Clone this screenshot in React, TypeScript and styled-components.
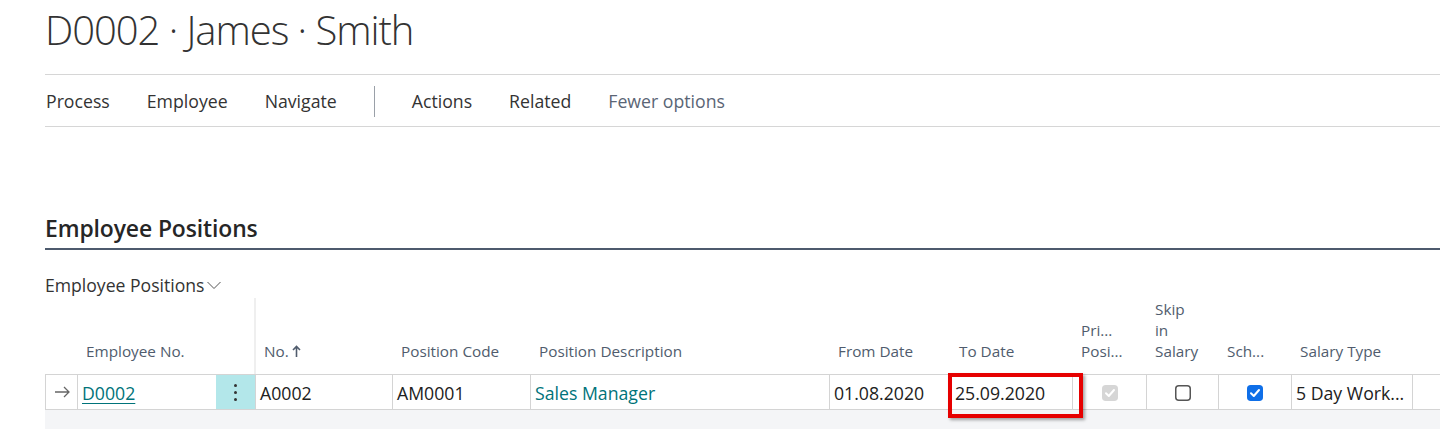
import React from "react";
import styled, { createGlobalStyle } from "styled-components";

const Global = createGlobalStyle`
  html, body { margin: 0; padding: 0; background: #fff; }
  body { font-family: "Open Sans", "Noto Sans", sans-serif; color: #212121; }
`;

const Page = styled.div`
  width: 1440px;
  height: 429px;
  overflow: hidden;
  padding-left: 45px;
  box-sizing: border-box;
`;

const Title = styled.h1`
  margin: 0;
  padding: 5px 0 0 0;
  height: 68px;
  box-sizing: border-box;
  font-size: 40px;
  font-weight: 300;
  line-height: 50px;
  color: #333;
  white-space: nowrap;
  letter-spacing: -1.05px;
`;

const Toolbar = styled.nav`
  margin-top: 6px;
  height: 53px;
  border-top: 1px solid #d6d6d6;
  border-bottom: 1px solid #d6d6d6;
  display: flex;
  align-items: center;
  box-sizing: border-box;
  padding-left: 1px;
  padding-top: 1px;
`;

const ToolItem = styled.span<{ $muted?: boolean }>`
  font-size: 17.7px;
  color: ${(p) => (p.$muted ? "#5a6575" : "#333")};
  margin-right: 37px;
  white-space: nowrap;
`;

const ToolSep = styled.span`
  width: 1px;
  height: 31px;
  background: #9aa0a8;
  margin-right: 37px;
`;

const SectionTitle = styled.h2`
  margin: 87px 0 0 0;
  height: 36px;
  font-size: 22.9px;
  font-weight: 600;
  line-height: 30px;
  color: #262626;
  border-bottom: 2px solid #4d5a6d;
  box-sizing: border-box;
  letter-spacing: -0.1px;
`;

const SubTitle = styled.div`
  margin-top: 23px;
  height: 24px;
  font-size: 17.6px;
  line-height: 24px;
  color: #333;
  display: flex;
  align-items: center;
  gap: 2px;
`;

const Grid = styled.div`
  margin-top: 1px;
  display: grid;
  grid-template-columns: 33px 138px 40px 137px 138px 299px 121px 122px 74px 72px 73px 121px 1fr;
`;

const HeadCell = styled.div<{ $divider?: boolean }>`
  height: 76px;
  box-sizing: border-box;
  padding: 0 6px 12px 8px;
  display: flex;
  flex-direction: column;
  justify-content: flex-end;
  font-size: 15.3px;
  line-height: 21px;
  color: #505c6d;
  white-space: nowrap;
  border-right: ${(p) => (p.$divider ? "2px solid #efefef" : "none")};
`;

const Cell = styled.div<{ $accent?: boolean; $noRight?: boolean; $center?: boolean }>`
  position: relative;
  height: 36px;
  box-sizing: border-box;
  border-top: 1px solid #d4d4d4;
  border-bottom: 1px solid #d4d4d4;
  border-right: ${(p) => (p.$noRight ? "none" : "1px solid #d4d4d4")};
  background: ${(p) => (p.$accent ? "#b3e7ea" : "#fff")};
  display: flex;
  align-items: center;
  justify-content: ${(p) => (p.$center ? "center" : "flex-start")};
  padding: 1px 4px 0 4px;
  font-size: 17.7px;
  color: #212121;
  white-space: nowrap;
  overflow: visible;
`;

const FirstCell = styled(Cell)`
  border-left: 1px solid #d4d4d4;
  justify-content: center;
  color: #666;
  padding: 0;
`;

const Link = styled.a`
  color: #00737a;
  text-decoration: underline;
  text-underline-offset: 3px;
  text-decoration-thickness: 1px;
`;

const TealText = styled.span`
  color: #00737a;
`;

const Dots = styled.span`
  display: flex;
  flex-direction: column;
  gap: 4px;
  align-items: center;
  span {
    width: 3px;
    height: 3px;
    border-radius: 50%;
    background: #333;
  }
`;

const Highlight = styled.div`
  position: absolute;
  z-index: 5;
  left: -3px;
  top: -2px;
  width: 135px;
  height: 45px;
  box-sizing: border-box;
  border: 4px solid #e60000;
  box-shadow: 2px 2px 3px rgba(0, 0, 0, 0.35);
  pointer-events: none;
`;

const Footer = styled.div`
  grid-column: 1 / -1;
  height: 20px;
  background: #f4f5f7;
`;

const Box = ({ checked, disabled }: { checked: boolean; disabled?: boolean }) => {
  const fill = disabled ? "#d6d6d6" : checked ? "#0f6fe8" : "#fff";
  const stroke = disabled ? "#d6d6d6" : checked ? "#0f6fe8" : "#555";
  return (
    <svg width="16" height="16" viewBox="0 0 16 16">
      <rect x="0.75" y="0.75" width="14.5" height="14.5" rx="3" fill={fill} stroke={stroke} strokeWidth="1.5" />
      {checked && (
        <path d="M4 8.3 L6.8 11 L12 5" fill="none" stroke="#fff" strokeWidth="2" strokeLinecap="round" strokeLinejoin="round" />
      )}
    </svg>
  );
};

const Chevron = () => (
  <svg width="16" height="10" viewBox="0 0 16 10">
    <path d="M1.5 2 L8 8.5 L14.5 2" fill="none" stroke="#555" strokeWidth="1" />
  </svg>
);

const Arrow = () => (
  <svg width="16" height="12" viewBox="0 0 16 12">
    <path d="M1 6 H15 M10 1 L15 6 L10 11" fill="none" stroke="#666" strokeWidth="1.3" />
  </svg>
);

const SortUp = () => (
  <svg width="9" height="13" viewBox="0 0 9 13" style={{ marginLeft: 3 }}>
    <path d="M4.5 12 V2 M1 5 L4.5 1.5 L8 5" fill="none" stroke="#505c6d" strokeWidth="1.6" />
  </svg>
);

export default function App() {
  return (
    <>
      <Global />
      <Page>
        <Title>D0002 · James · Smith</Title>
        <Toolbar>
          <ToolItem>Process</ToolItem>
          <ToolItem>Employee</ToolItem>
          <ToolItem>Navigate</ToolItem>
          <ToolSep />
          <ToolItem>Actions</ToolItem>
          <ToolItem>Related</ToolItem>
          <ToolItem $muted>Fewer options</ToolItem>
        </Toolbar>
        <SectionTitle>Employee Positions</SectionTitle>
        <SubTitle>
          Employee Positions
          <Chevron />
        </SubTitle>
        <Grid>
          <HeadCell />
          <HeadCell>Employee No.</HeadCell>
          <HeadCell $divider />
          <HeadCell>
            <span style={{ display: "flex", alignItems: "center" }}>
              No.
              <SortUp />
            </span>
          </HeadCell>
          <HeadCell>Position Code</HeadCell>
          <HeadCell>Position Description</HeadCell>
          <HeadCell>From Date</HeadCell>
          <HeadCell>To Date</HeadCell>
          <HeadCell>
            <span>Pri...</span>
            <span>Posi...</span>
          </HeadCell>
          <HeadCell>
            <span>Skip</span>
            <span>in</span>
            <span>Salary</span>
          </HeadCell>
          <HeadCell>Sch...</HeadCell>
          <HeadCell>Salary Type</HeadCell>
          <HeadCell />

          <FirstCell>
            <Arrow />
          </FirstCell>
          <Cell $noRight>
            <Link>D0002</Link>
          </Cell>
          <Cell $accent $center>
            <Dots>
              <span />
              <span />
              <span />
            </Dots>
          </Cell>
          <Cell>A0002</Cell>
          <Cell>AM0001</Cell>
          <Cell>
            <TealText>Sales Manager</TealText>
          </Cell>
          <Cell>01.08.2020</Cell>
          <Cell>
            25.09.2020
            <Highlight />
          </Cell>
          <Cell $center>
            <Box checked disabled />
          </Cell>
          <Cell $center>
            <Box checked={false} />
          </Cell>
          <Cell $center>
            <Box checked />
          </Cell>
          <Cell>5 Day Work...</Cell>
          <Cell $noRight />
          <Footer />
        </Grid>
      </Page>
    </>
  );
}
